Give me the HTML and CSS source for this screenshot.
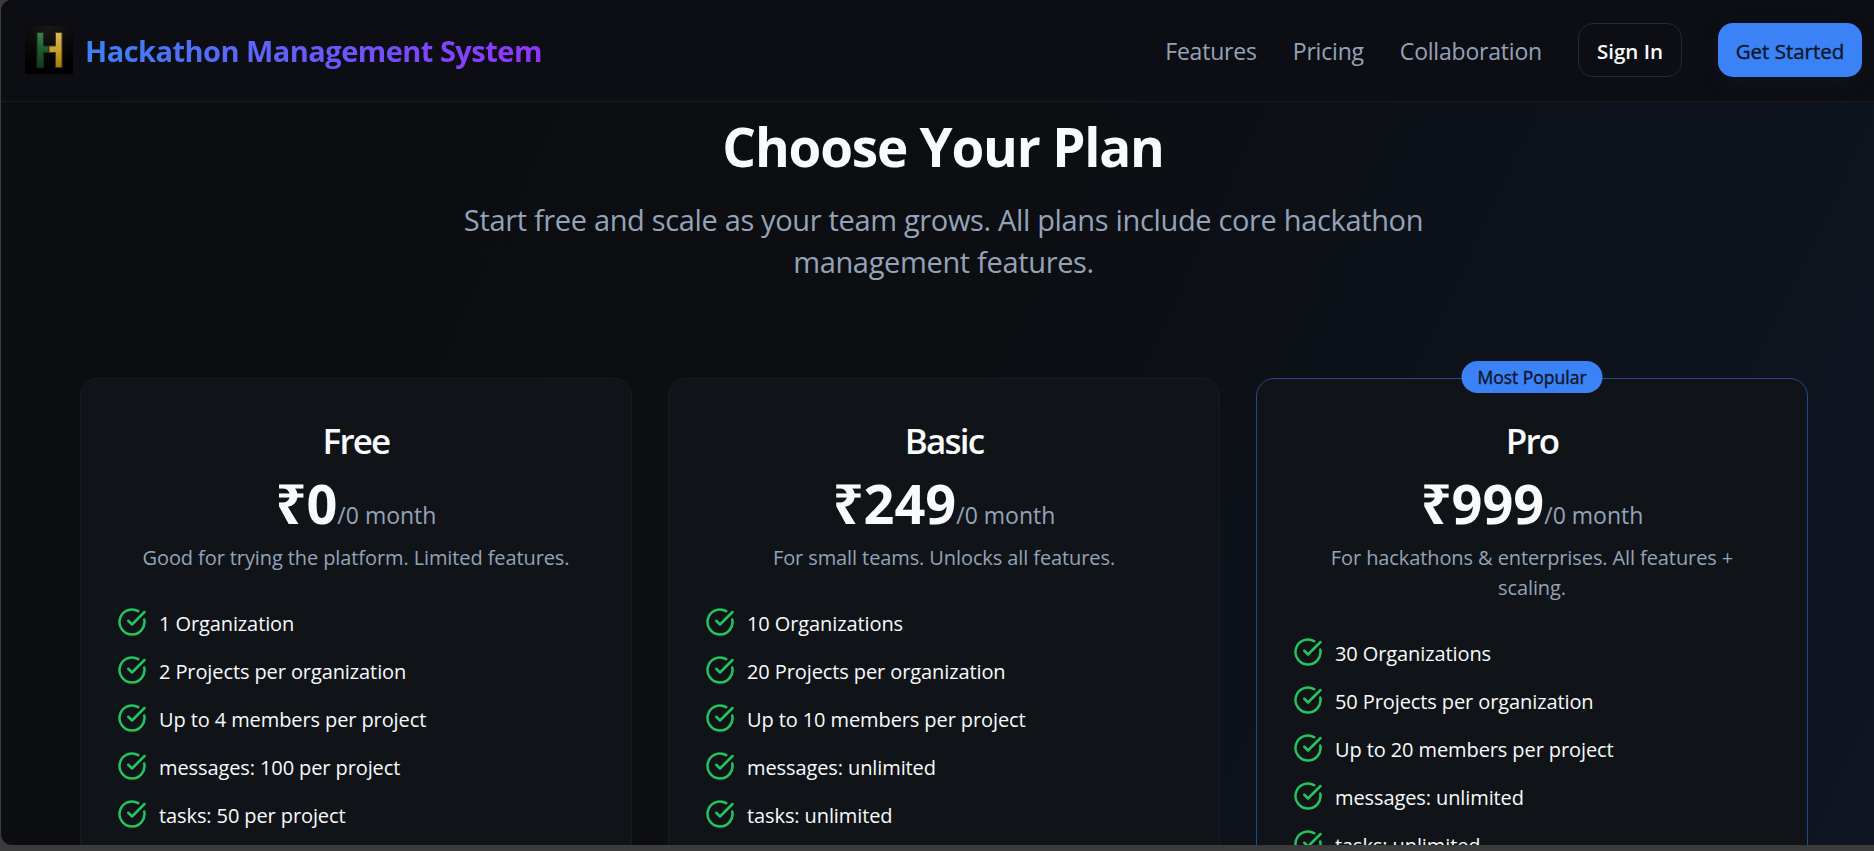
FILE: index.html
```html
<!DOCTYPE html>
<html lang="en">
<head>
  <meta charset="UTF-8" />
  <meta name="viewport" content="width=device-width, initial-scale=1.0"/>
  <title>Hackathon Management System</title>
  <link rel="stylesheet" href="styles.css">
</head>
<body>
  <svg class="sprite" aria-hidden="true">
    <symbol id="check" viewBox="0 0 24 24">
      <path d="M21.801 10A10 10 0 1 1 17 3.335"/>
      <path d="m9 11 3 3L22 4"/>
    </symbol>
  </svg>

  <div class="page">
    <header class="navbar">
      <a class="brand" href="#">
        <svg class="logo" viewBox="0 0 48 48">
          <defs>
            <radialGradient id="logoBg" cx="0.5" cy="0" r="0.9">
              <stop offset="0" stop-color="#191919"/>
              <stop offset="1" stop-color="#000"/>
            </radialGradient>
            <linearGradient id="green" x1="0" y1="0" x2="0" y2="1">
              <stop offset="0" stop-color="#3f8055"/>
              <stop offset="0.5" stop-color="#1f5a30"/>
              <stop offset="1" stop-color="#103a1a"/>
            </linearGradient>
            <linearGradient id="gold" x1="0" y1="0" x2="0" y2="1">
              <stop offset="0" stop-color="#d8b860"/>
              <stop offset="0.5" stop-color="#c9a12f"/>
              <stop offset="1" stop-color="#a5790f"/>
            </linearGradient>
          </defs>
          <rect width="48" height="48" fill="url(#logoBg)"/>
          <path d="M12 6.500h6.500v13.500h5.500v6.500h-5.500v15H12z" fill="url(#green)" stroke="#12301b"/>
          <path d="M30.500 6.500h6.500v35h-6.500v-15H24v-6.500h6.500z" fill="url(#gold)" stroke="#4b3a10"/>
        </svg>
        <span class="brand-name">Hackathon Management System</span>
      </a>
      <nav class="nav-links">
        <a class="nav-link" href="#">Features</a>
        <a class="nav-link" href="#">Pricing</a>
        <a class="nav-link" href="#">Collaboration</a>
        <a class="btn btn-outline" href="#">Sign In</a>
        <a class="btn btn-primary" href="#">Get Started</a>
      </nav>
    </header>

    <main class="pricing">
      <h1 class="pricing-title">Choose Your Plan</h1>
      <p class="pricing-sub">Start free and scale as your team grows. All plans include core hackathon management features.</p>

      <div class="plans">
        <section class="plan">
          <h2 class="plan-name">Free</h2>
          <div class="plan-price">₹0<span class="period">/0 month</span></div>
          <p class="plan-desc">Good for trying the platform. Limited features.</p>
          <ul class="features">
            <li><svg class="check"><use href="#check"/></svg><span>1 Organization</span></li>
            <li><svg class="check"><use href="#check"/></svg><span>2 Projects per organization</span></li>
            <li><svg class="check"><use href="#check"/></svg><span>Up to 4 members per project</span></li>
            <li><svg class="check"><use href="#check"/></svg><span>messages: 100 per project</span></li>
            <li><svg class="check"><use href="#check"/></svg><span>tasks: 50 per project</span></li>
          </ul>
        </section>

        <section class="plan">
          <h2 class="plan-name">Basic</h2>
          <div class="plan-price">₹249<span class="period">/0 month</span></div>
          <p class="plan-desc">For small teams. Unlocks all features.</p>
          <ul class="features">
            <li><svg class="check"><use href="#check"/></svg><span>10 Organizations</span></li>
            <li><svg class="check"><use href="#check"/></svg><span>20 Projects per organization</span></li>
            <li><svg class="check"><use href="#check"/></svg><span>Up to 10 members per project</span></li>
            <li><svg class="check"><use href="#check"/></svg><span>messages: unlimited</span></li>
            <li><svg class="check"><use href="#check"/></svg><span>tasks: unlimited</span></li>
          </ul>
        </section>

        <section class="plan plan-popular">
          <span class="badge">Most Popular</span>
          <h2 class="plan-name">Pro</h2>
          <div class="plan-price">₹999<span class="period">/0 month</span></div>
          <p class="plan-desc">For hackathons &amp; enterprises. All features + scaling.</p>
          <ul class="features">
            <li><svg class="check"><use href="#check"/></svg><span>30 Organizations</span></li>
            <li><svg class="check"><use href="#check"/></svg><span>50 Projects per organization</span></li>
            <li><svg class="check"><use href="#check"/></svg><span>Up to 20 members per project</span></li>
            <li><svg class="check"><use href="#check"/></svg><span>messages: unlimited</span></li>
            <li><svg class="check"><use href="#check"/></svg><span>tasks: unlimited</span></li>
          </ul>
        </section>
      </div>
    </main>
  </div>
</body>
</html>
```
FILE: styles.css
```css
* {
  box-sizing: border-box;
  margin: 0;
  padding: 0;
}
body {
  height: 851px;
  overflow: hidden;
  padding-left: 1px;
  background-color: #3b3b3b;
  color: #f8fafc;
  font-family: "Open Sans", "Noto Sans", sans-serif;
}
a {
  color: inherit;
  text-decoration: none;
}
.sprite {
  display: none;
}
.page {
  height: 845px;
  overflow: hidden;
  border-radius: 11px 0 0 11px;
  background: linear-gradient(115deg, #0c0d11 0%, #0c0e12 50%, #0d121c 75%, #0f1621 100%);
}

/* top bar */
.navbar {
  display: flex;
  align-items: center;
  justify-content: space-between;
  height: 102px;
  padding: 0 12px 2px 24px;
  background-color: #0d0e13;
  border-bottom: 1px solid #151a24;
}
.brand {
  display: flex;
  align-items: center;
  gap: 12px;
}
.logo {
  width: 48px;
  height: 48px;
}
.brand-name {
  padding-top: 2px;
  font-size: 29px;
  font-weight: 700;
  line-height: 42px;
  letter-spacing: -0.53px;
  background: linear-gradient(90deg, #3b82f6, #9333ff);
  -webkit-background-clip: text;
  background-clip: text;
  color: transparent;
}
.nav-links {
  display: flex;
  align-items: center;
  gap: 36px;
}
.nav-link {
  padding-top: 2px;
  font-size: 23px;
  line-height: 36px;
  letter-spacing: -0.2px;
  color: #94a3b8;
}
.btn {
  display: flex;
  align-items: center;
  justify-content: center;
  height: 54px;
  padding-top: 2px;
  border-radius: 15px;
  font-size: 20.5px;
  font-weight: 600;
}
.btn-outline {
  width: 104px;
  border: 1px solid #1e293b;
}
.btn-primary {
  width: 144px;
  background-color: #3b82f6;
  color: #0f172a;
  font-weight: 500;
  -webkit-text-stroke: 0.4px #0f172a;
  box-shadow: 0 6px 24px rgba(59, 130, 246, 0.06);
}

/* pricing */
.pricing {
  padding: 15px 65px 0 79px;
}
.pricing-title {
  padding-right: 3px;
  font-size: 53px;
  font-weight: 700;
  line-height: 60px;
  letter-spacing: -1.2px;
  text-align: center;
}
.pricing-sub {
  width: 1008px;
  margin: 22px auto 95px;
  padding-right: 2px;
  font-size: 29px;
  line-height: 42px;
  letter-spacing: -0.34px;
  text-align: center;
  color: #94a3b8;
}
.plans {
  display: grid;
  grid-template-columns: repeat(3, 552px);
  gap: 36px;
}
.plan {
  position: relative;
  height: 700px;
  padding: 44px 36px 0;
  border: 1px solid #161d29;
  border-radius: 18px;
  background-color: #101418;
  text-align: center;
}
.plan-popular {
  border-color: #254a8a;
}
.badge {
  position: absolute;
  top: -18px;
  left: 50%;
  width: 141px;
  transform: translateX(-50%);
  border-radius: 16px;
  background-color: #3b82f6;
  color: #0f172a;
  font-size: 17.5px;
  font-weight: 500;
  -webkit-text-stroke: 0.4px #0f172a;
  line-height: 32px;
}
.plan-name {
  margin-bottom: 14px;
  font-size: 35px;
  font-weight: 600;
  line-height: 36px;
  letter-spacing: -1.8px;
}
.plan-price {
  font-size: 54px;
  font-weight: 700;
  line-height: 60px;
}
.period {
  font-size: 23px;
  font-weight: 400;
  line-height: 24px;
  color: #94a3b8;
}
.plan-desc {
  width: 450px;
  margin: 10px auto 35px;
  font-size: 20px;
  line-height: 30px;
  letter-spacing: -0.1px;
  color: #94a3b8;
}
.features {
  display: grid;
  gap: 18px;
  list-style: none;
}
.features li {
  display: flex;
  gap: 12px;
  font-size: 20px;
  line-height: 32px;
  height: 30px;
  letter-spacing: -0.1px;
}
.check {
  width: 30px;
  height: 30px;
  margin-top: -1px;
  fill: none;
  stroke: #22c55e;
  stroke-width: 2;
  stroke-linecap: round;
  stroke-linejoin: round;
}
```
